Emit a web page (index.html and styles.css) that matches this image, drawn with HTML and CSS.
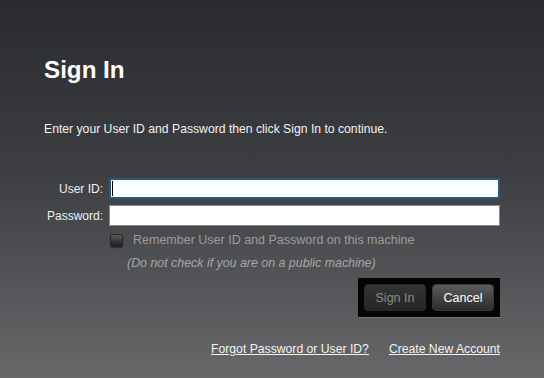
FILE: index.html
```html
<!DOCTYPE html>
<html lang="en">
<head>
  <meta charset="UTF-8">
  <meta name="viewport" content="width=device-width, initial-scale=1.0">
  <title>Sign In</title>
  <link rel="stylesheet" href="styles.css">
</head>
<body>

<div class="signin">
  <h1>Sign In</h1>
  <p class="intro">Enter your User ID and Password then click Sign In to continue.</p>

  <form class="login-form" onsubmit="return false">
    <label for="userid">User ID:</label>
    <span class="field">
      <input type="text" id="userid" class="focused">
      <span class="caret"></span>
    </span>

    <label for="password">Password:</label>
    <span class="field">
      <input type="password" id="password">
    </span>

    <div class="remember">
      <input type="checkbox" id="remember" disabled>
      <label for="remember">Remember User ID and Password on this machine</label>
    </div>
    <div class="note">(Do not check if you are on a public machine)</div>

    <div class="actions">
      <div class="button-box">
        <button type="submit" class="btn btn-disabled" disabled>Sign In</button>
        <button type="button" class="btn">Cancel</button>
      </div>
    </div>
  </form>

  <div class="links">
    <a href="#">Forgot Password or User ID?</a>
    <a href="#">Create New Account</a>
  </div>
</div>

</body>
</html>
```

FILE: styles.css
```css
* {
  margin: 0;
  padding: 0;
  box-sizing: border-box;
  font-family: 'Liberation Sans', Arial, sans-serif;
}

html, body {
  width: 100%;
  height: 100%;
  overflow: hidden;
}

body {
  background: linear-gradient(#292b2f 0%, #3c3e42 45%, #68686a 100%);
  color: #f0f0f0;
  font-size: 12px;
}

.signin {
  width: 500px;
  padding: 57px 0 0 44px;
}

h1 {
  font-size: 24.2px;
  line-height: 26px;
  font-weight: bold;
  color: #ffffff;
}

.intro {
  margin-top: 39px;
  line-height: 14px;
  font-size: 12.2px;
  color: #f2f2f2;
}

.login-form {
  margin-top: 42px;
  display: grid;
  grid-template-columns: 59px 391px;
  column-gap: 6px;
  row-gap: 6px;
  align-items: center;
}

.login-form > label {
  text-align: right;
  line-height: 14px;
  color: #f0f0f0;
}

.field {
  position: relative;
  display: block;
  height: 21px;
}

.field input {
  width: 100%;
  height: 21px;
  border: 1px solid #8a8a8a;
  background: #ffffff;
  padding: 0 2px;
  font-size: 12px;
  outline: none;
}

.field input.focused {
  border: 2px solid #2c5878;
  background: #fafeff;
}

.caret {
  position: absolute;
  left: 3px;
  top: 3px;
  width: 1px;
  height: 15px;
  background: #000;
}

.remember {
  grid-column: 2;
  display: flex;
  align-items: center;
  gap: 10px;
  margin-top: 1px;
  padding-left: 1px;
}

.remember input {
  appearance: none;
  width: 13px;
  height: 13px;
  border-radius: 2px;
  border: 1px solid #262626;
  background: linear-gradient(#5a5a5a, #1e1e1e);
  box-shadow: 0 1px 1px rgba(0, 0, 0, 0.4);
}

.remember label {
  line-height: 14px;
  font-size: 12.5px;
  color: #9c9c9c;
}

.note {
  grid-column: 2;
  padding-left: 18px;
  line-height: 14px;
  font-size: 12.4px;
  font-style: italic;
  color: #a6a6a6;
  margin-top: 3px;
}

.actions {
  grid-column: 2;
  display: flex;
  justify-content: flex-end;
  margin-top: 2px;
}

.button-box {
  display: flex;
  gap: 6px;
  padding: 6px;
  background: #050505;
  box-shadow: 0 1px 0 #777;
}

.btn {
  width: 62px;
  height: 27px;
  border: 1px solid #3a3a3a;
  border-radius: 4px;
  background: linear-gradient(#5c5c5c, #2c2c2c);
  color: #ffffff;
  font-size: 12.5px;
  cursor: pointer;
}

.btn-disabled {
  background: linear-gradient(#343434, #262626);
  border-color: #2a2a2a;
  color: #8a8a8a;
  cursor: default;
}

.links {
  display: flex;
  justify-content: flex-end;
  gap: 20px;
  margin-top: 25px;
  width: 456px;
  line-height: 14px;
}

.links a {
  color: #f2f2f2;
  font-size: 12.2px;
  text-decoration: underline;
}
```
